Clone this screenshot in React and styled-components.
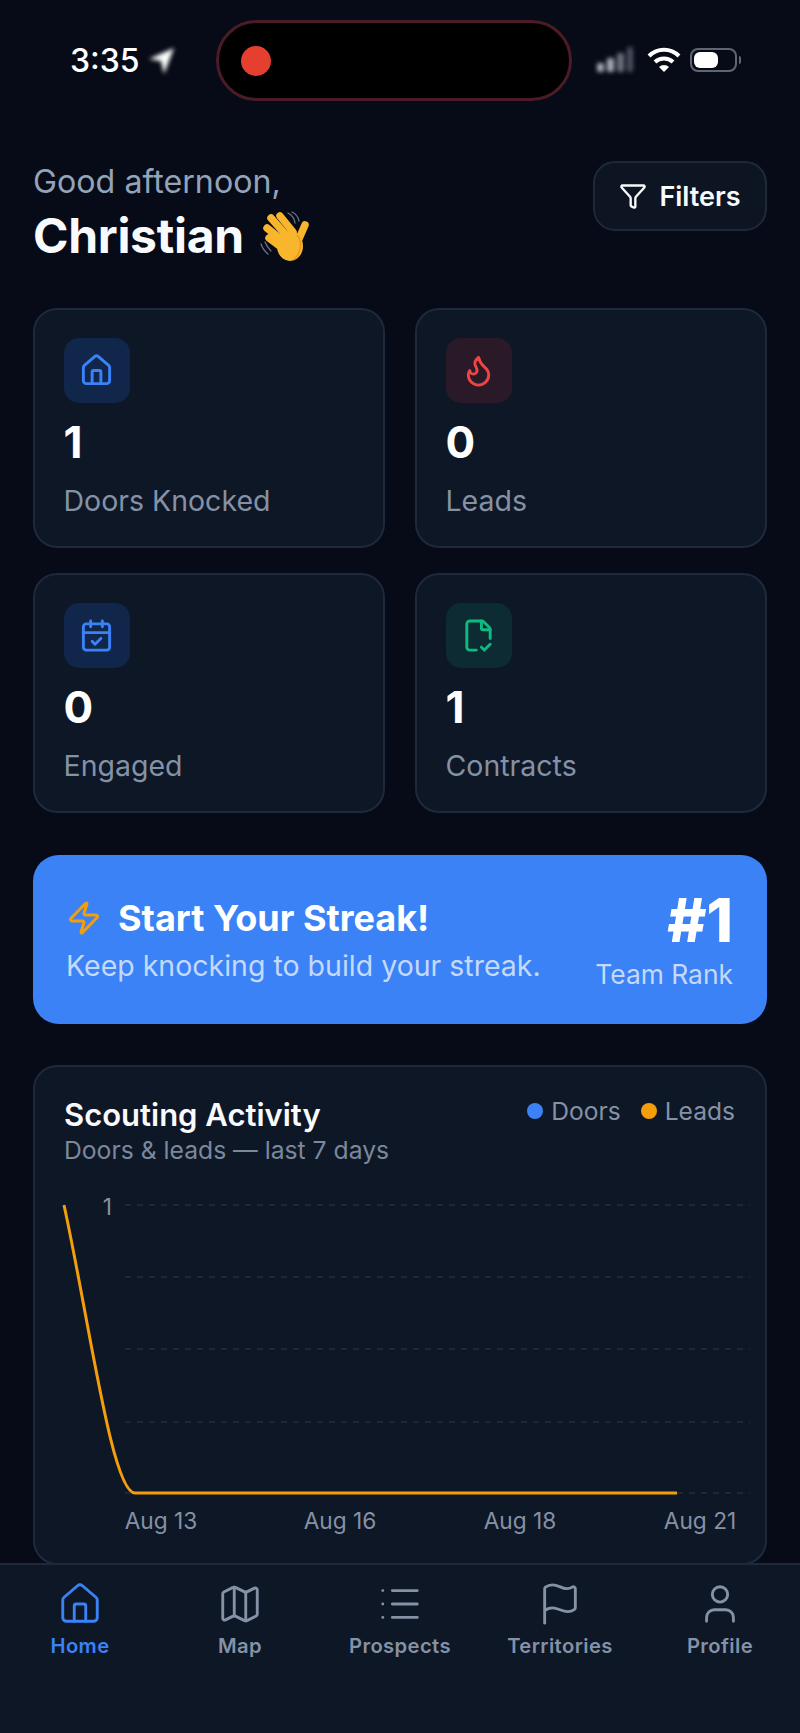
import React from "react";
import styled, { createGlobalStyle } from "styled-components";
import {
  House,
  Flame,
  CalendarCheck,
  FileCheck2,
  Funnel,
  Zap,
  Map as MapIcon,
  List,
  Flag,
  User,
} from "lucide-react";

const GlobalStyle = createGlobalStyle`
  html, body {
    margin: 0;
    padding: 0;
    background: #060b17;
  }
  * {
    box-sizing: border-box;
  }
`;

const Screen = styled.div`
  width: 800px;
  height: 1733px;
  display: flex;
  flex-direction: column;
  overflow: hidden;
  background: #060b17;
  color: #fff;
  font-family: Inter, "Liberation Sans", sans-serif;
`;

const StatusBar = styled.div`
  height: 120px;
  flex-shrink: 0;
  display: flex;
  align-items: flex-start;
  padding-top: 20px;
`;

const StatusLeft = styled.div`
  width: 216px;
  height: 80px;
  padding-left: 70px;
  display: flex;
  align-items: center;
  gap: 6px;
`;

const Time = styled.span`
  font-size: 32px;
  font-weight: 500;
`;

const Island = styled.div`
  width: 356px;
  height: 81px;
  border-radius: 41px;
  background: #000;
  border: 3px solid #4b1b26;
  display: flex;
  align-items: center;
  padding-left: 22px;
`;

const RecordDot = styled.div`
  width: 30px;
  height: 30px;
  border-radius: 50%;
  background: #e5402f;
`;

const StatusRight = styled.div`
  flex: 1;
  height: 80px;
  padding-left: 24px;
  display: flex;
  align-items: center;
  gap: 9px;
`;

const Blurred = styled.svg`
  filter: blur(2.2px);
  flex-shrink: 0;
`;

const Battery = styled.div`
  width: 47px;
  height: 24px;
  border: 2px solid #5f6672;
  border-radius: 8px;
  padding: 2px;
  position: relative;
  &::after {
    content: "";
    position: absolute;
    right: -6px;
    top: 6px;
    width: 2px;
    height: 8px;
    background: #5f6672;
    border-radius: 0 2px 2px 0;
  }
`;

const BatteryFill = styled.div`
  width: 24px;
  height: 100%;
  background: #fff;
  border-radius: 6px;
`;

const Content = styled.div`
  flex: 1;
  min-height: 0;
  overflow: hidden;
  padding: 41px 33px 0;
  display: flex;
  flex-direction: column;
`;

const Header = styled.div`
  display: flex;
  justify-content: space-between;
  align-items: flex-start;
`;

const Greeting = styled.div`
  font-size: 32.2px;
  line-height: 40px;
  color: #94a3b8;
  margin-top: 1px;
`;

const Name = styled.div`
  display: flex;
  align-items: center;
  gap: 15px;
  margin-top: 5px;
  font-size: 48px;
  line-height: 58px;
  font-weight: 700;
  color: #f8fafc;
  letter-spacing: -0.3px;
`;

const FilterButton = styled.button`
  width: 174px;
  height: 70px;
  display: flex;
  align-items: center;
  justify-content: center;
  gap: 12px;
  border-radius: 22px;
  border: 2px solid #1e293b;
  background: #0e1522;
  color: #f8fafc;
  font-family: inherit;
  font-size: 27px;
  font-weight: 600;
`;

const StatGrid = styled.div`
  display: grid;
  grid-template-columns: repeat(2, 352px);
  grid-auto-rows: 240px;
  column-gap: 30px;
  row-gap: 25px;
  margin-top: 43px;
`;

const StatCard = styled.div`
  padding: 28px 28.5px 0;
  border-radius: 24px;
  border: 2px solid #1e293b;
  background: #0e1726;
`;

const IconBox = styled.div`
  width: 66px;
  height: 65px;
  border-radius: 15px;
  display: flex;
  align-items: center;
  justify-content: center;
  background: ${(p) => p.$bg};
  color: ${(p) => p.$color};
`;

const StatValue = styled.div`
  margin-top: 12px;
  font-size: 44px;
  line-height: 54px;
  font-weight: 700;
  color: #fff;
`;

const StatLabel = styled.div`
  margin-top: 14px;
  font-size: 28.5px;
  line-height: 36px;
  color: #8591a5;
`;

const Banner = styled.div`
  margin-top: 42px;
  height: 169px;
  flex-shrink: 0;
  border-radius: 26px;
  background: #3b82f6;
  padding: 1px 34px 0 33px;
  display: flex;
  justify-content: space-between;
  align-items: center;
`;

const BannerTitle = styled.div`
  display: flex;
  align-items: center;
  gap: 16px;
  font-size: 36px;
  line-height: 44px;
  font-weight: 700;
  color: #fff;
  svg {
    color: #f59e0b;
  }
`;

const BannerText = styled.div`
  margin-top: 8px;
  font-size: 28.5px;
  line-height: 36px;
  color: #c4d9fb;
`;

const Rank = styled.div`
  text-align: right;
  padding-bottom: 3px;
`;

const RankValue = styled.div`
  font-size: 60px;
  line-height: 66px;
  font-weight: 800;
  color: #fff;
`;

const RankLabel = styled.div`
  margin-top: 4px;
  font-size: 26.4px;
  line-height: 34px;
  color: #c4d9fb;
`;

const ChartCard = styled.div`
  margin-top: 41px;
  flex-shrink: 0;
  height: 500px;
  padding: 28px 29px 0;
  border-radius: 24px;
  border: 2px solid #1e293b;
  background: #0e1726;
`;

const ChartHeader = styled.div`
  display: flex;
  justify-content: space-between;
  align-items: flex-start;
`;

const ChartTitle = styled.div`
  font-size: 31px;
  line-height: 39px;
  font-weight: 600;
  color: #f8fafc;
`;

const ChartSub = styled.div`
  font-size: 24.7px;
  line-height: 32px;
  color: #7c889c;
`;

const Legend = styled.div`
  display: flex;
  gap: 20px;
  padding: 1px 1px 0 0;
`;

const LegendItem = styled.div`
  display: flex;
  align-items: center;
  gap: 8px;
  font-size: 24.6px;
  line-height: 30px;
  color: #8591a5;
  &::before {
    content: "";
    width: 16px;
    height: 16px;
    border-radius: 50%;
    background: ${(p) => p.$color};
  }
`;

const ChartSvg = styled.svg`
  display: block;
  margin: 24px 0 0 -29px;
`;

const AxisText = styled.text`
  font-family: Inter, "Liberation Sans", sans-serif;
  font-size: 22.7px;
  fill: #8591a5;
`;

const TabBar = styled.div`
  height: 170px;
  flex-shrink: 0;
  border-top: 2px solid #1e293b;
  background: #0d1726;
  display: grid;
  grid-template-columns: repeat(5, 1fr);
  padding-top: 16px;
  align-items: start;
`;

const Tab = styled.div`
  display: flex;
  flex-direction: column;
  align-items: center;
  gap: 6px;
  font-size: 20.2px;
  line-height: 26px;
  font-weight: 600;
  letter-spacing: 0.4px;
  color: ${(p) => (p.$active ? "#3b82f6" : "#8591a5")};
`;

const stats = [
  { icon: House, bg: "#10264a", color: "#3b82f6", value: 1, label: "Doors Knocked" },
  { icon: Flame, bg: "#2a1a28", color: "#ef4444", value: 0, label: "Leads" },
  { icon: CalendarCheck, bg: "#10264a", color: "#3b82f6", value: 0, label: "Engaged" },
  { icon: FileCheck2, bg: "#0c2b32", color: "#10b981", value: 1, label: "Contracts" },
];

const tabs = [
  { icon: House, label: "Home", active: true },
  { icon: MapIcon, label: "Map" },
  { icon: List, label: "Prospects" },
  { icon: Flag, label: "Territories" },
  { icon: User, label: "Profile" },
];

const gridLines = [1205, 1277, 1349, 1422, 1493];
const xLabels = [
  { x: 161, text: "Aug 13" },
  { x: 340, text: "Aug 16" },
  { x: 520, text: "Aug 18" },
  { x: 700, text: "Aug 21" },
];

// chart is drawn in page coordinates, shifted by where the svg starts
const CHART_TOP = 1190;

const Wave = () => (
  <svg width="52" height="52" viewBox="8 5 52 52">
    <g fill="none" stroke="#f8b62d" strokeWidth="7.5" strokeLinecap="round">
      <path d="M29 11 L42 27" />
      <path d="M20 13 L35 30" />
      <path d="M16 23 L32 36" />
      <path d="M18 33 L30 42" />
      <path d="M54 20 L47 36" />
    </g>
    <ellipse cx="39" cy="41" rx="13" ry="15" fill="#f8b62d" />
    <path d="M46 30 C52 36 50 50 42 55" fill="none" stroke="#e99a1c" strokeWidth="1.5" />
    <g fill="none" stroke="#6b7484" strokeWidth="1.3" strokeLinecap="round">
      <path d="M37 8 q6 3 7 10" />
      <path d="M41 7 q6 3 7 9" />
      <path d="M10 39 q2 6 7 10" />
      <path d="M14 37 q2 5 6 9" />
    </g>
  </svg>
);

const App = () => {
  return (
    <Screen>
      <GlobalStyle />
      <StatusBar>
        <StatusLeft>
          <Time>3:35</Time>
          <Blurred width="30" height="32" viewBox="0 0 30 32">
            <path d="M28 4 L3 15 L15 17 L18 30 Z" fill="#fff" />
          </Blurred>
        </StatusLeft>
        <Island>
          <RecordDot />
        </Island>
        <StatusRight>
          <Blurred width="42" height="30" viewBox="0 0 42 30">
            <g fill="#aab0ba">
              <rect x="1" y="18" width="7" height="9" rx="2" />
              <rect x="11" y="13" width="7" height="14" rx="2" />
              <rect x="21" y="8" width="7" height="19" rx="2" fill="#6d7480" />
              <rect x="31" y="2" width="6" height="25" rx="2" fill="#4b5260" />
            </g>
          </Blurred>
          <svg width="34" height="26" viewBox="0 0 34 26">
            <g fill="none" stroke="#fff" strokeWidth="4">
              <path d="M2 9 a21 21 0 0 1 30 0" />
              <path d="M8 15 a13 13 0 0 1 18 0" />
            </g>
            <path d="M17 25 l-5 -5 a7 7 0 0 1 10 0 Z" fill="#fff" />
          </svg>
          <Battery>
            <BatteryFill />
          </Battery>
        </StatusRight>
      </StatusBar>

      <Content>
        <Header>
          <div>
            <Greeting>Good afternoon,</Greeting>
            <Name>
              Christian <Wave />
            </Name>
          </div>
          <FilterButton>
            <Funnel size={28} strokeWidth={2} />
            Filters
          </FilterButton>
        </Header>

        <StatGrid>
          {stats.map(({ icon: Icon, bg, color, value, label }) => (
            <StatCard key={label}>
              <IconBox $bg={bg} $color={color}>
                <Icon size={35} strokeWidth={2} />
              </IconBox>
              <StatValue>{value}</StatValue>
              <StatLabel>{label}</StatLabel>
            </StatCard>
          ))}
        </StatGrid>

        <Banner>
          <div>
            <BannerTitle>
              <Zap size={36} strokeWidth={2} />
              Start Your Streak!
            </BannerTitle>
            <BannerText>Keep knocking to build your streak.</BannerText>
          </div>
          <Rank>
            <RankValue>#1</RankValue>
            <RankLabel>Team Rank</RankLabel>
          </Rank>
        </Banner>

        <ChartCard>
          <ChartHeader>
            <div>
              <ChartTitle>Scouting Activity</ChartTitle>
              <ChartSub>Doors &amp; leads — last 7 days</ChartSub>
            </div>
            <Legend>
              <LegendItem $color="#3b82f6">Doors</LegendItem>
              <LegendItem $color="#f59e0b">Leads</LegendItem>
            </Legend>
          </ChartHeader>
          <ChartSvg width="730" height="360" viewBox={`35 ${CHART_TOP} 730 360`}>
            {gridLines.map((y) => (
              <line
                key={y}
                x1="125"
                x2="750"
                y1={y}
                y2={y}
                stroke="#222e42"
                strokeWidth="1.5"
                strokeDasharray="6 6"
              />
            ))}
            <AxisText x="112" y="1215" textAnchor="end">
              1
            </AxisText>
            {xLabels.map((l) => (
              <AxisText key={l.text} x={l.x} y="1529" textAnchor="middle">
                {l.text}
              </AxisText>
            ))}
            <path
              d="M64 1205 C90 1325 112 1493 135 1493 L677 1493"
              fill="none"
              stroke="#f59e0b"
              strokeWidth="3"
            />
          </ChartSvg>
        </ChartCard>
      </Content>

      <TabBar>
        {tabs.map(({ icon: Icon, label, active }) => (
          <Tab key={label} $active={active}>
            <Icon size={46} strokeWidth={1.5} />
            {label}
          </Tab>
        ))}
      </TabBar>
    </Screen>
  );
};

export default App;
